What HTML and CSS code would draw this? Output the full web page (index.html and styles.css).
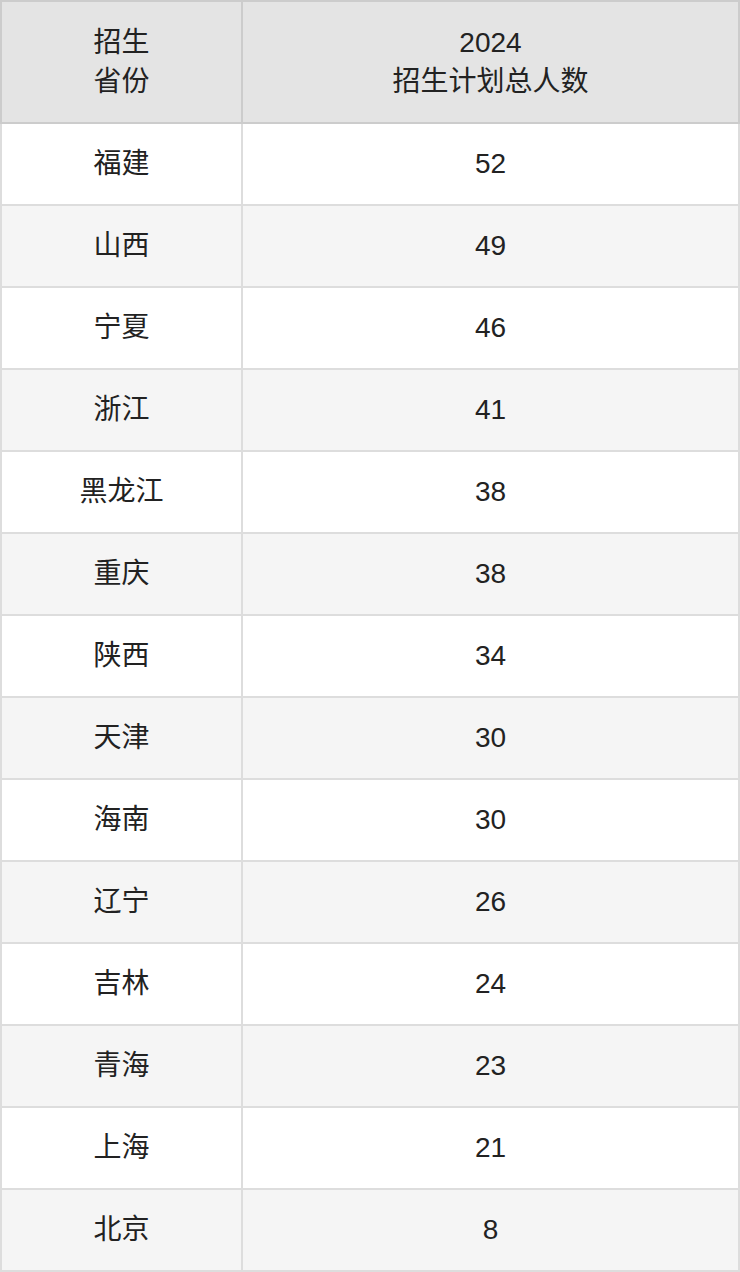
FILE: index.html
```html
<!DOCTYPE html>
<html lang="zh">
<head>
<meta charset="utf-8">
<link rel="stylesheet" href="styles.css">
</head>
<body>
<table class="plan">
  <thead>
    <tr>
      <th class="col-prov">招生<br>省份</th>
      <th class="col-num">2024<br>招生计划总人数</th>
    </tr>
  </thead>
  <tbody>
    <tr><td>福建</td><td>52</td></tr>
    <tr><td>山西</td><td>49</td></tr>
    <tr><td>宁夏</td><td>46</td></tr>
    <tr><td>浙江</td><td>41</td></tr>
    <tr><td>黑龙江</td><td>38</td></tr>
    <tr><td>重庆</td><td>38</td></tr>
    <tr><td>陕西</td><td>34</td></tr>
    <tr><td>天津</td><td>30</td></tr>
    <tr><td>海南</td><td>30</td></tr>
    <tr><td>辽宁</td><td>26</td></tr>
    <tr><td>吉林</td><td>24</td></tr>
    <tr><td>青海</td><td>23</td></tr>
    <tr><td>上海</td><td>21</td></tr>
    <tr><td>北京</td><td>8</td></tr>
  </tbody>
</table>
</body>
</html>
```

FILE: styles.css
```css
html, body {
  margin: 0;
  padding: 0;
  background: #ffffff;
}

.plan {
  width: 740px;
  border-collapse: separate;
  border-spacing: 0;
  table-layout: fixed;
  font-family: "Liberation Sans", "Noto Sans CJK SC", sans-serif;
  font-size: 28px;
  color: #222222;
  text-align: center;
}

.plan th,
.plan td {
  padding: 0;
  vertical-align: middle;
  font-weight: normal;
}

.plan th {
  height: 120px;
  line-height: 39px;
  background: #e4e4e4;
  border-top: 2px solid #cccccc;
  border-bottom: 2px solid #cccccc;
}

.plan .col-prov {
  width: 239px;
  border-left: 2px solid #cccccc;
  border-right: 2px solid #cccccc;
}

.plan .col-num {
  border-right: 2px solid #cccccc;
}

.plan td {
  height: 80px;
  line-height: 32px;
  border-bottom: 2px solid #dddddd;
  border-right: 2px solid #dddddd;
}

.plan td:first-child {
  border-left: 2px solid #dddddd;
}

.plan tbody tr:nth-child(odd) td {
  background: #ffffff;
}

.plan tbody tr:nth-child(even) td {
  background: #f5f5f5;
}
```
